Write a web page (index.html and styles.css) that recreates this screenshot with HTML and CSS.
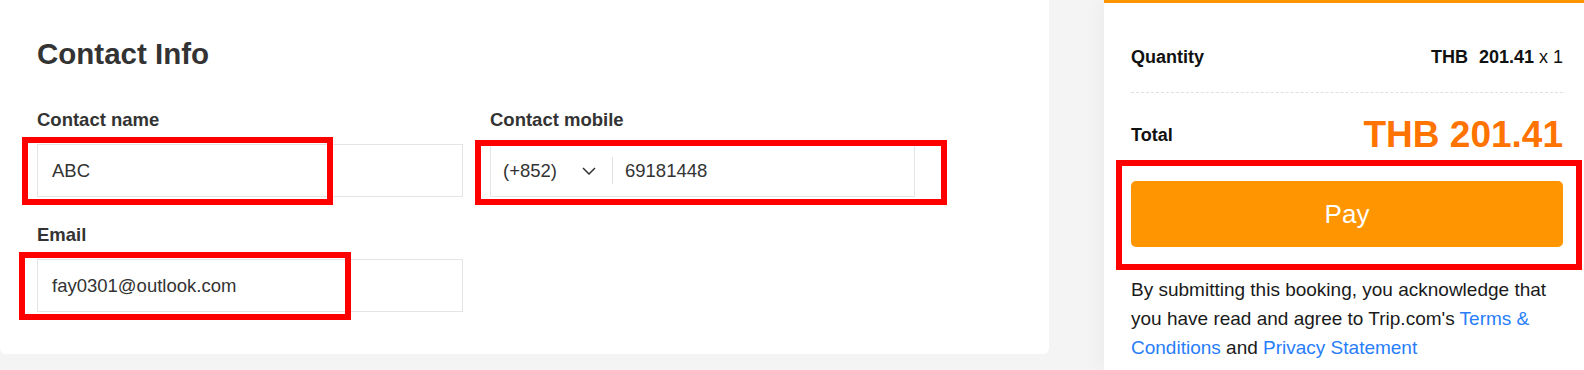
FILE: index.html
```html
<!DOCTYPE html>
<html lang="en">
<head>
<meta charset="utf-8">
<title>Contact Info</title>
<link rel="stylesheet" href="styles.css">
</head>
<body>
<div class="page">
  <section class="card">
    <h2 class="title">Contact Info</h2>
    <div class="form">
      <div class="field">
        <label class="label">Contact name</label>
        <div class="input">ABC</div>
        <span class="mark mark-name"></span>
      </div>
      <div class="field">
        <label class="label">Contact mobile</label>
        <div class="input input-phone">
          <span class="code">(+852)</span>
          <svg class="chev" width="14" height="8" viewBox="0 0 14 8"><polyline points="1,1 7,7 13,1" fill="none" stroke="#333" stroke-width="1.5"/></svg>
          <span class="divider"></span>
          <span class="num">69181448</span>
        </div>
        <span class="mark mark-phone"></span>
      </div>
      <div class="field">
        <label class="label">Email</label>
        <div class="input">fay0301@outlook.com</div>
        <span class="mark mark-email"></span>
      </div>
    </div>
  </section>
  <aside class="summary">
    <div class="row row-qty">
      <span class="row-label">Quantity</span>
      <span class="qty"><b class="cur">THB</b><b>201.41</b> x 1</span>
    </div>
    <div class="row row-total">
      <span class="row-label">Total</span>
      <span class="total">THB 201.41</span>
    </div>
    <div class="pay-wrap">
      <button class="pay">Pay</button>
      <span class="mark mark-pay"></span>
    </div>
    <p class="terms">By submitting this booking, you acknowledge that you have read and agree to Trip.com's <a href="#">Terms &amp;</a> <a href="#">Conditions</a> and <a href="#">Privacy Statement</a></p>
  </aside>
</div>
</body>
</html>
```

FILE: styles.css
```css
html, body {
  margin: 0;
  padding: 0;
  overflow: hidden;
}
body {
  background: #f4f4f4;
  font-family: "Liberation Sans", Arial, sans-serif;
  color: #333;
}
.page {
  display: flex;
  align-items: flex-start;
  height: 370px;
}
.card {
  position: relative;
  width: 1049px;
  box-sizing: border-box;
  background: #fff;
  border-radius: 0 0 6px 6px;
  padding: 36px 37px 42px;
}
.title {
  margin: 0;
  font-size: 29.5px;
  line-height: 36px;
  font-weight: 700;
  color: #333;
}
.form {
  display: grid;
  grid-template-columns: 426px 425px;
  column-gap: 27px;
  row-gap: 26px;
  margin-top: 36px;
}
.field {
  position: relative;
}
.label {
  display: block;
  font-size: 18.5px;
  line-height: 24px;
  font-weight: 700;
  color: #333;
  margin-bottom: 12px;
}
.input {
  height: 53px;
  box-sizing: border-box;
  border: 1px solid #e4e4e4;
  padding: 0 14px;
  display: flex;
  align-items: center;
  font-size: 18.5px;
  color: #333;
}
.input-phone {
  padding-left: 12px;
}
.chev {
  margin-left: 25px;
}
.divider {
  width: 1px;
  height: 27px;
  background: #e2e2e2;
  margin-left: 16px;
  margin-right: 12px;
}
.mark {
  position: absolute;
  border: 6px solid #ff0000;
  box-sizing: border-box;
  pointer-events: none;
}
.mark-name {
  left: -15px;
  top: 29px;
  width: 311px;
  height: 68px;
}
.mark-phone {
  left: -15px;
  top: 32px;
  width: 472px;
  height: 65px;
}
.mark-email {
  left: -18px;
  top: 29px;
  width: 332px;
  height: 68px;
}
.summary {
  flex: 1;
  margin-left: 55px;
  min-height: 370px;
  box-sizing: border-box;
  background: #fff;
  border-top: 3px solid #ff9500;
  padding: 0 21px 0 27px;
  box-shadow: -6px 0 16px rgba(0, 0, 0, 0.03);
}
.row {
  display: flex;
  justify-content: space-between;
  align-items: center;
}
.row-qty {
  padding: 42px 0 23px;
  border-bottom: 1px dashed #e0e0e0;
  line-height: 24px;
}
.row-label {
  font-size: 18px;
  font-weight: 700;
  color: #111;
}
.qty {
  color: #111;
  font-size: 18px;
}
.qty b {
  font-weight: 700;
}
.cur {
  margin-right: 11px;
}
.row-total {
  padding-top: 20px;
}
.total {
  font-size: 37px;
  line-height: 44px;
  font-weight: 700;
  color: #ff7300;
}
.pay-wrap {
  position: relative;
  margin-top: 24px;
}
.pay {
  display: block;
  width: 100%;
  height: 66px;
  border: 0;
  border-radius: 5px;
  background: #ff9500;
  color: #fff;
  font-family: "Liberation Sans", Arial, sans-serif;
  font-size: 26px;
  cursor: pointer;
}
.mark-pay {
  left: -15px;
  right: -19px;
  top: -21px;
  bottom: -23px;
}
.terms {
  margin: 28px 0 0;
  font-size: 19px;
  line-height: 29px;
  color: #1a1a1a;
}
.terms a {
  color: #287dfa;
  text-decoration: none;
}
```
